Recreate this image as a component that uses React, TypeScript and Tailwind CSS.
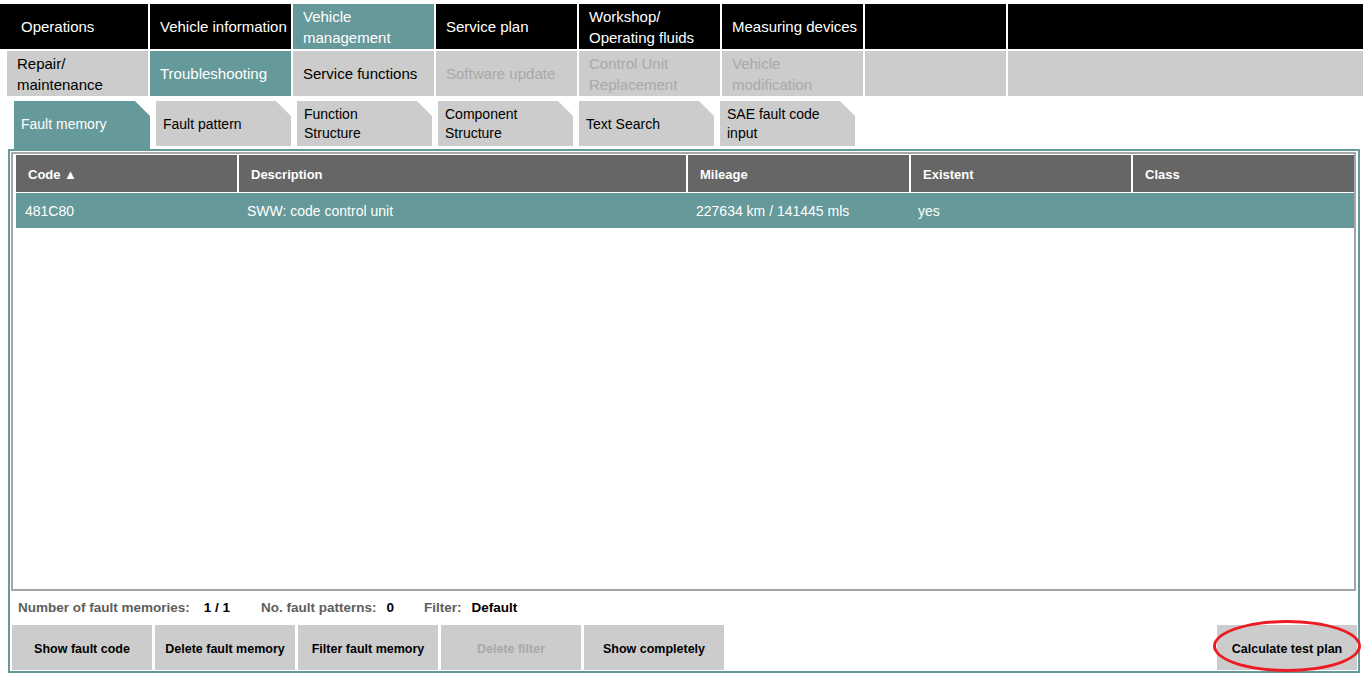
import React from "react";

const clipTab = "[clip-path:polygon(0_0,calc(100%_-_15px)_0,100%_15px,100%_100%,0_100%)]";

function Lines({ lines }: { lines: string[] }) {
  return (
    <div className="whitespace-nowrap">
      {lines.map((l, i) => (
        <div key={i}>{l}</div>
      ))}
    </div>
  );
}

export default function App() {
  const row1 = [
    { t: ["Vehicle information"], active: false },
    { t: ["Vehicle", "management"], active: true },
    { t: ["Service plan"], active: false },
    { t: ["Workshop/", "Operating fluids"], active: false },
    { t: ["Measuring devices"], active: false },
    { t: [], active: false },
  ];
  const row2 = [
    { t: ["Repair/", "maintenance"], state: "normal" },
    { t: ["Troubleshooting"], state: "active" },
    { t: ["Service functions"], state: "normal" },
    { t: ["Software update"], state: "disabled" },
    { t: ["Control Unit", "Replacement"], state: "disabled" },
    { t: ["Vehicle", "modification"], state: "disabled" },
    { t: [], state: "normal" },
  ];
  const tabs = [
    { t: ["Fault memory"], active: true },
    { t: ["Fault pattern"], active: false },
    { t: ["Function", "Structure"], active: false },
    { t: ["Component", "Structure"], active: false },
    { t: ["Text Search"], active: false },
    { t: ["SAE fault code", "input"], active: false },
  ];
  const buttons = [
    { t: "Show fault code", disabled: false },
    { t: "Delete fault memory", disabled: false },
    { t: "Filter fault memory", disabled: false },
    { t: "Delete filter", disabled: true },
    { t: "Show completely", disabled: false },
  ];

  return (
    <div className="w-[1363px] h-[675px] bg-white overflow-hidden font-['Liberation_Sans',Arial,sans-serif]">
      {/* Top navigation row 1 */}
      <div className="flex gap-[2px] pt-[4px] text-[15px] leading-[21px] text-white">
        <div className="w-[148px] h-[45px] bg-black flex items-center pl-[21px] whitespace-nowrap">
          Operations
        </div>
        {row1.map((c, i) => (
          <div
            key={i}
            className={`w-[141px] h-[45px] flex items-center pl-[10px] ${
              c.active ? "bg-[#669999]" : "bg-black"
            }`}
          >
            <Lines lines={c.t} />
          </div>
        ))}
        <div className="flex-1 h-[45px] bg-black" />
      </div>

      {/* Top navigation row 2 */}
      <div className="flex gap-[2px] mt-[2px] pl-[7px] text-[15px] leading-[21px]">
        {row2.map((c, i) => (
          <div
            key={i}
            className={`w-[141px] h-[45px] flex items-center pl-[10px] ${
              c.state === "active"
                ? "bg-[#669999] text-white"
                : c.state === "disabled"
                ? "bg-[#cccccc] text-[#a9a9a9]"
                : "bg-[#cccccc] text-black"
            }`}
          >
            <Lines lines={c.t} />
          </div>
        ))}
        <div className="flex-1 h-[45px] bg-[#cccccc]" />
      </div>

      {/* Sub tabs */}
      <div className="flex items-start gap-[6px] mt-[5px] pl-[14px] h-[48px] text-[14px] leading-[19px]">
        {tabs.map((t, i) => (
          <div
            key={i}
            className={`flex items-center pl-[7px] pt-[1px] ${clipTab} ${
              t.active
                ? "w-[136px] h-[48px] bg-[#669999] text-white pb-[2px]"
                : "w-[135px] h-[45px] bg-[#cccccc] text-black"
            }`}
          >
            <Lines lines={t.t} />
          </div>
        ))}
      </div>

      {/* Panel */}
      <div className="ml-[8px] w-[1352px] h-[524px] border-2 border-[#669999] flex flex-col">
        <div className="mt-[1px] ml-[1px] mr-[2px] h-[439px] border-2 border-[#a6a6a6] pt-[1px] pl-[3px]">
          {/* Header */}
          <div className="grid grid-cols-[221px_447px_221px_220px_1fr] gap-x-[2px] h-[37px] text-[13px] font-bold text-white">
            {["Code ▲", "Description", "Mileage", "Existent", "Class"].map((h) => (
              <div key={h} className="bg-[#666666] flex items-center pl-[12px] pt-[3px] whitespace-nowrap">
                {h}
              </div>
            ))}
          </div>
          {/* Row */}
          <div className="mt-[1px] grid grid-cols-[221px_447px_221px_220px_1fr] gap-x-[2px] h-[35px] bg-[#669999] text-[14px] text-white">
            <div className="flex items-center pl-[9px] pt-[1px] whitespace-nowrap">481C80</div>
            <div className="flex items-center pl-[8px] pt-[1px] whitespace-nowrap">SWW: code control unit</div>
            <div className="flex items-center pl-[8px] pt-[1px] whitespace-nowrap">227634 km / 141445 mls</div>
            <div className="flex items-center pl-[7px] pt-[1px] whitespace-nowrap">yes</div>
            <div />
          </div>
        </div>

        {/* Stats line */}
        <div className="h-[34px] flex items-center pl-[8px] pt-[1px] text-[13.5px] font-bold whitespace-nowrap">
          <span className="text-[#5e5e5e]">Number of fault memories:</span>
          <span className="ml-[14px] text-black">1 / 1</span>
          <span className="ml-[31px] text-[#5e5e5e]">No. fault patterns:</span>
          <span className="ml-[10px] text-black">0</span>
          <span className="ml-[30px] text-[#5e5e5e]">Filter:</span>
          <span className="ml-[10px] text-black">Default</span>
        </div>

        {/* Buttons */}
        <div className="h-[45px] flex gap-[3px] pl-[2px] pr-[1px] text-[12.5px] font-bold">
          {buttons.map((b) => (
            <div
              key={b.t}
              className={`w-[140px] h-[45px] bg-[#cccccc] flex items-center justify-center pt-[3px] whitespace-nowrap ${
                b.disabled ? "text-[#a9a9a9]" : "text-black"
              }`}
            >
              {b.t}
            </div>
          ))}
          <div className="flex-1" />
          <div className="relative w-[140px] h-[45px] bg-[#cccccc] flex items-center justify-center pt-[3px] whitespace-nowrap text-black">
            Calculate test plan
            <div className="absolute left-[-4px] right-[-4px] top-[-5px] bottom-[-2px] border-[3px] border-[#ed1c24] rounded-[50%]" />
          </div>
        </div>
      </div>
    </div>
  );
}
